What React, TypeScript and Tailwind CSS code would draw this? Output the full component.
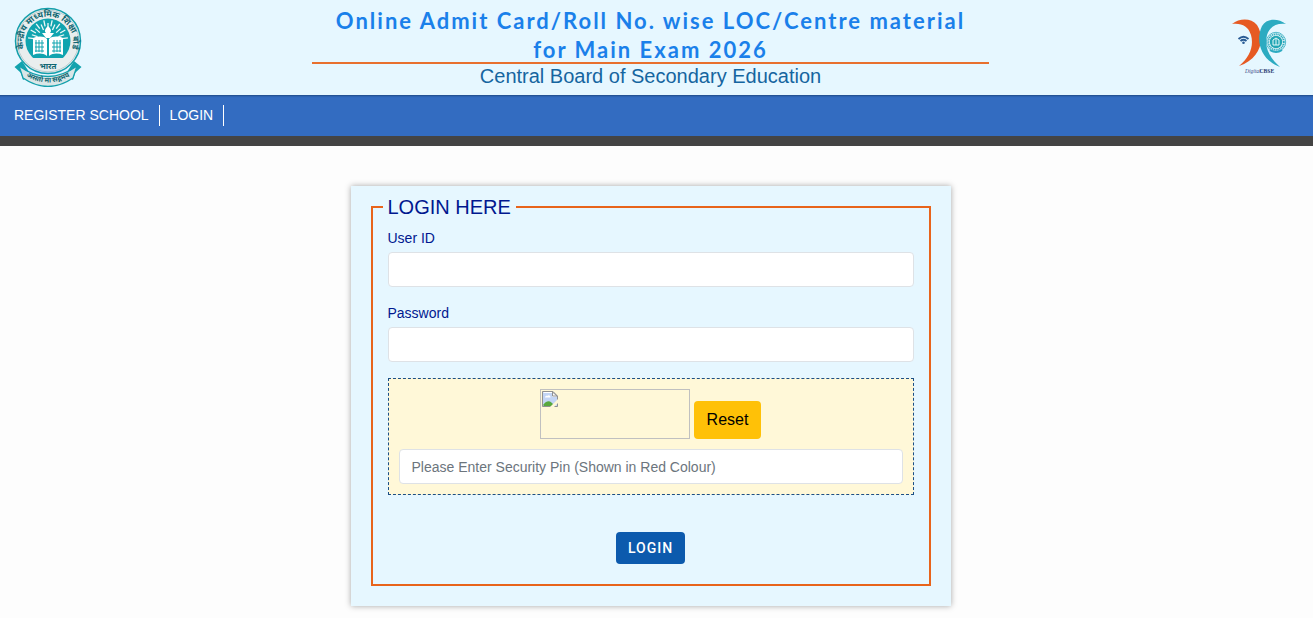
import { useState } from 'react'

const navLinks = [
  { label: 'REGISTER SCHOOL', href: '#register' },
  { label: 'LOGIN', href: '#login' },
]

const rays = Array.from({ length: 15 }, (_, i) => -84 + i * 12)

const inputClass =
  'block h-[35px] w-full rounded border border-[#dee2e6] bg-white px-3 text-sm text-[#212529] placeholder:text-[#6c757d] outline-none focus:border-[#86b7fe]'

// Round board seal with the motto ribbon underneath
function BoardSeal() {
  return (
    <svg viewBox="0 0 68 80" className="h-20 w-[68px]" role="img" aria-label="CBSE seal">
      <defs>
        <path id="seal-top" d="M 15 51 A 25 25 0 1 1 53 51" />
        <path id="seal-motto" d="M 6 65 Q 34 86 62 65" />
      </defs>
      <path d="M0.5 60 L8 54 L17 68 L9 73 L7 66 Z" fill="#11a3ae" />
      <path d="M67.5 60 L60 54 L51 68 L59 73 L61 66 Z" fill="#11a3ae" />
      <circle cx="34" cy="34" r="32.5" fill="#e9eeee" stroke="#139fab" strokeWidth="1.5" />
      <circle cx="34" cy="34" r="30.8" fill="none" stroke="#9fb9bd" strokeWidth="0.6" />
      <circle cx="34" cy="34" r="22.5" fill="#10a4af" />
      {/* Light rays above the torch */}
      <g stroke="#eef8f8" strokeWidth="1.3">
        {rays.map((angle, i) => (
          <line key={angle} x1="34" y1={i % 2 ? 22 : 19} x2="34" y2={i % 2 ? 16 : 13} transform={`rotate(${angle} 34 33)`} />
        ))}
      </g>
      <path d="M34 19 C31 22 30 24 32 26 H36 C38 24 37 22 34 19 Z M28 26 H40 L36 31 H32 Z" fill="#fff" />
      {/* Open book */}
      <path d="M19 31 C24 29 30 29 33 32 V49 C29 46 24 46 19 48 Z" fill="#fff" />
      <path d="M49 31 C44 29 38 29 35 32 V49 C39 46 44 46 49 48 Z" fill="#fff" />
      <path
        d="M22 33 V45 M25 33 V45 M28 33 V45.5 M40 33 V45.5 M43 33 V45 M46 33 V45 M21 36 H30 M38 36 H47 M21 40 H30 M38 40 H47 M21 44 H30 M38 44 H47"
        stroke="#10a4af"
        strokeWidth="1"
        fill="none"
      />
      <path d="M17 51 H51 C47 57 41 60 34 60 C27 60 21 57 17 51 Z" fill="#e9eeee" />
      <path d="M5 59 Q34 80 63 59 L59 71 Q34 88 9 71 Z" fill="#d9e6e7" stroke="#139fab" strokeWidth="1.3" />
      <g fill="#0f6671" fontFamily='"Noto Sans Devanagari", "Noto Sans", sans-serif' fontWeight="700" textAnchor="middle">
        <text fontSize="8.5">
          <textPath href="#seal-top" startOffset="50%">केन्द्रीय माध्यमिक शिक्षा बोर्ड</textPath>
        </text>
        <text x="34" y="62" fontSize="8">भारत</text>
        <text fontSize="7">
          <textPath href="#seal-motto" startOffset="50%">असतो मा सद्गमय</textPath>
        </text>
      </g>
    </svg>
  )
}

function DigitalLogo() {
  return (
    <svg viewBox="0 0 56 56" className="h-14 w-14" role="img" aria-label="Digital CBSE">
      <path d="M1 5 C9 -1 20 -1 26 6 C35 20 29 40 8 47 C19 38 23 27 20 16 C17 7 11 4 1 5 Z" fill="#e65a23" />
      <path d="M55 5 C47 -1 36 -1 31 7 C24 22 30 41 49 48 C38 38 33 28 36 16 C39 7 46 4 55 5 Z" fill="#2cabc1" />
      <g fill="none" stroke="#285a94" strokeWidth="1.8">
        <path d="M7.5 20 Q12.5 15.500 17.500 20" />
        <path d="M9.500 22 Q12.500 19.500 15.500 22" />
      </g>
      <circle cx="12.500" cy="23.800" r="1.300" fill="#285a94" />
      <circle cx="45" cy="23" r="9.700" fill="#e6f3f5" stroke="#2cabc1" strokeWidth="0.8" />
      <circle cx="45" cy="23" r="7.800" fill="none" stroke="#2cabc1" strokeWidth="1.800" strokeDasharray="1.200 0.700" />
      <circle cx="45" cy="23" r="6.200" fill="#22a6b5" />
      <path d="M42 21 L45 19 L48 21 V26 H42 Z M45 20 V26" fill="none" stroke="#e9fafa" />
      <path d="M39 31 Q45 35 51 31" fill="none" stroke="#2cabc1" strokeWidth="2" />
      <text x="14" y="54" fontSize="5.5" fontStyle="italic" fill="#3c4c86" fontFamily='"Liberation Serif", serif'>
        Digital
      </text>
      <text x="28.5" y="54" fontSize="5.6" fontWeight="700" fill="#26376f" fontFamily='"Liberation Serif", serif'>
        CBSE
      </text>
    </svg>
  )
}

// Placeholder shown while no captcha has been loaded
function CaptchaImage() {
  return (
    <div role="img" aria-label="Security pin" className="h-[50px] w-[150px] border border-[#c0c0c0]">
      <svg viewBox="0 0 16 16" className="m-px size-4">
        <path d="M0.5 0.5 H11 L15.500 5 V15.500 H0.5 Z" fill="#c3d5f5" stroke="#919191" />
        <path d="M1.500 1.500 H10.500 V5.500 H14.500" fill="none" stroke="#fff" />
        <path d="M3 6.500 C3 4.500 5 4.500 5.500 5 C6 3.500 8.500 4 8.500 6.500 Z" fill="#fff" />
        <path d="M1.500 15 V13.500 C5 9 9 9 12 15 Z" fill="#58a83e" />
        <path d="M10.500 1 V5 H15 Z" fill="#fff" stroke="#919191" />
        <path d="M8 16 L16 8 V12 L12 16 Z" fill="#fff8d8" />
      </svg>
    </div>
  )
}

export default function App() {
  const [pin, setPin] = useState('')

  return (
    <div className="min-h-screen bg-[#fdfdfd] font-['Liberation_Sans',Arial,sans-serif]">
      <header className="bg-[#e6f7ff]">
        <div className="mr-3 flex items-start justify-between px-3.5">
          <div className="w-[68px] pt-[7px]">
            <BoardSeal />
          </div>
          <div className="w-full max-w-[677px] pt-1.5 text-center">
            <h1 className="h-[58px] border-b-2 border-[#e8702e] font-['Lato','Open_Sans',sans-serif] text-[22px] leading-[29px] font-bold tracking-[2px] text-[#1a80ea]">
              Online Admit Card/Roll No. wise LOC/Centre material
              <br />
              for Main Exam 2026
            </h1>
            <p className="pb-1.5 text-xl leading-[25px] text-[#1565a0]">Central Board of Secondary Education</p>
          </div>
          <div className="flex w-[68px] justify-end pt-[19px]">
            <DigitalLogo />
          </div>
        </div>
      </header>

      <nav className="border-b-10 border-[#444] bg-[#336cc1] py-2.5 shadow-[inset_0_3px_2px_-2px_#1f4a85]">
        <ul className="flex pl-1">
          {navLinks.map((link) => (
            <li key={link.label} className="border-r border-white px-2.5 text-sm leading-[21px] text-white">
              <a href={link.href}>{link.label}</a>
            </li>
          ))}
        </ul>
      </nav>

      <main className="mr-3 px-4 pt-10 pb-3">
        <form
          onSubmit={(e) => e.preventDefault()}
          className="mx-auto max-w-[600px] bg-[#e6f7ff] px-5 pt-1.5 pb-5 shadow-[0_0_6px_rgba(0,0,0,0.35)]"
        >
          <fieldset className="border-2 border-[#e8641b] px-2.5 pb-5">
            <legend className="px-[5px] text-xl leading-[30px] text-[#00188f]">LOGIN HERE</legend>
            <div className="flex flex-col gap-4 px-[5px] pt-1.5">
              <div>
                <label htmlFor="user-id" className="mb-1 block text-sm leading-5 text-[#00188f]">
                  User ID
                </label>
                <input id="user-id" type="text" className={inputClass} />
              </div>
              <div>
                <label htmlFor="password" className="mb-1 block text-sm leading-5 text-[#00188f]">
                  Password
                </label>
                <input id="password" type="password" className={inputClass} />
              </div>
              <div className="border border-dashed border-[#1b4f86] bg-[#fff8d8] p-2.5">
                <div className="mb-2.5 flex items-end justify-center gap-1">
                  <CaptchaImage />
                  <button type="button" onClick={() => setPin('')} className="h-[38px] rounded bg-[#ffc107] px-[13px] text-base text-black">
                    Reset
                  </button>
                </div>
                <input
                  type="text"
                  aria-label="Security Pin"
                  placeholder="Please Enter Security Pin (Shown in Red Colour)"
                  value={pin}
                  onChange={(e) => setPin(e.target.value)}
                  className={inputClass}
                />
              </div>
            </div>
            <div className="mt-[37px] flex justify-center">
              <button type="submit" className="h-8 rounded bg-[#0c5aad] px-3 font-['Roboto',sans-serif] text-sm font-medium tracking-[1px] text-white">
                LOGIN
              </button>
            </div>
          </fieldset>
        </form>
      </main>
    </div>
  )
}
